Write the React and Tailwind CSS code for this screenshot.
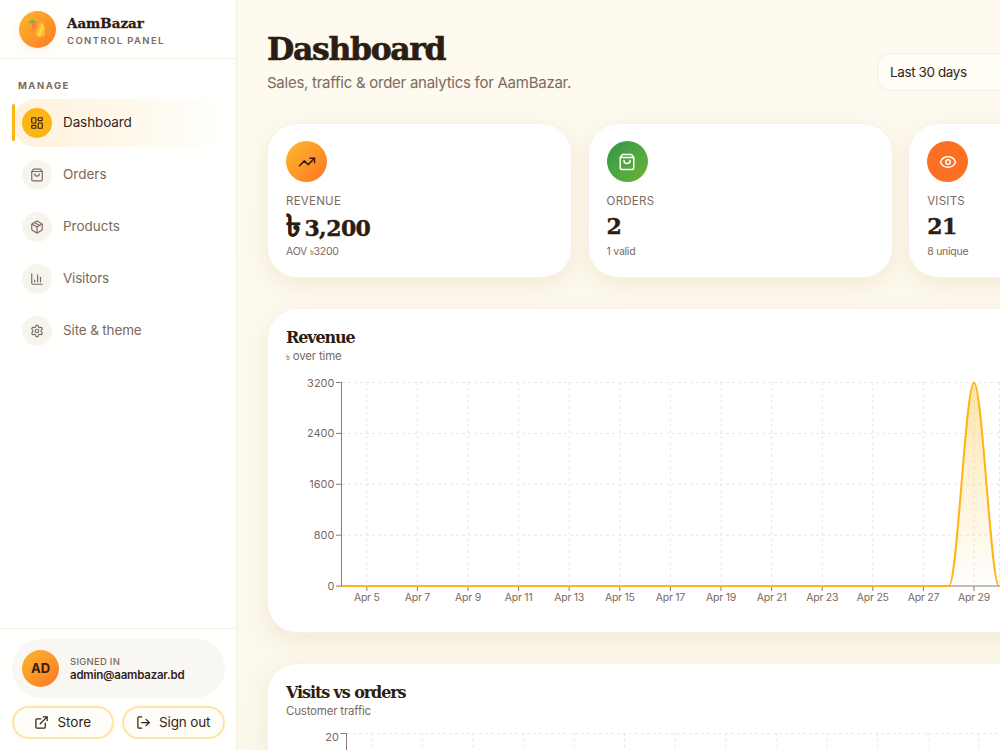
import React from 'react';
import {
  ChartColumn,
  ExternalLink,
  Eye,
  LayoutDashboard,
  LogOut,
  Package,
  Settings,
  TrendingUp,
} from 'lucide-react';

const NAV = [
  { label: 'Dashboard', icon: LayoutDashboard, active: true, tracking: 'tracking-[-0.1px]' },
  { label: 'Orders', icon: BagIcon, tracking: 'tracking-[0px]' },
  { label: 'Products', icon: Package, tracking: 'tracking-[0px]' },
  { label: 'Visitors', icon: ChartColumn, tracking: 'tracking-[-0.2px]' },
  { label: 'Site & theme', icon: Settings, tracking: 'tracking-[-0.15px]' },
];

const STATS = [
  {
    label: 'Revenue',
    value: <><span className="mr-[4px] text-[30px] leading-none">৳</span>3,200</>,
    note: <>AOV <span className="text-[8px]">৳</span>3200</>,
    icon: TrendingUp,
    tone: 'bg-linear-to-br from-[#fdba2d] to-[#fb7324] text-[#33200f]',
  },
  { label: 'Orders', value: '2', note: '1 valid', icon: BagIcon, tone: 'bg-linear-to-br from-[#2f9748] to-[#6ab433] text-white' },
  { label: 'Visits', value: '21', note: '8 unique', icon: Eye, tone: 'bg-[#fb7022] text-white' },
];

function BagIcon({ className, strokeWidth = 2 }) {
  return (
    <svg className={className} viewBox="0 0 24 24" fill="none" stroke="currentColor" strokeWidth={strokeWidth} strokeLinecap="round" strokeLinejoin="round">
      <path d="M6 2 3 6v14a2 2 0 0 0 2 2h14a2 2 0 0 0 2-2V6l-3-4Z" />
      <path d="M3 6h18" />
      <path d="M16 10a4 4 0 0 1-8 0" />
    </svg>
  );
}

function Mango() {
  return (
    <svg className="h-5 w-5" viewBox="0 0 20 20">
      <defs>
        <linearGradient id="mango" x1="0.1" y1="0.3" x2="0.85" y2="0.6">
          <stop offset="0" stopColor="#ff7a39" />
          <stop offset="0.4" stopColor="#ffa22e" />
          <stop offset="0.8" stopColor="#ffdc3c" />
          <stop offset="1" stopColor="#ffb92c" />
        </linearGradient>
      </defs>
      <path d="M5 3.600C8.300 1.800 13.500 2.700 16 6.500C17.800 10.300 17.700 15.200 15.700 17.200C13.200 19 8.200 17.500 6 14C3.500 10.300 3 5.400 5 3.600Z" fill="url(#mango)" />
      <path d="M.6 3.200C2.600.8 6.300.6 7.500 2.600C6.500 4.300 3 5.300.6 3.200Z" fill="#73b62d" />
    </svg>
  );
}

function Sidebar() {
  return (
    <aside className="flex w-[237px] shrink-0 flex-col border-r border-[#f1eee6] bg-[#fffffd]">
      <div className="flex h-[59px] items-center gap-[11px] border-b border-[#f1f0ec] pl-[19px]">
        <div className="flex h-[37px] w-[37px] items-center justify-center rounded-full bg-linear-to-br from-[#fdb72d] to-[#fb7926] shadow-[0_3px_12px_rgba(251,150,40,0.12)]">
          <Mango />
        </div>
        <div className="pt-1">
          <div className="font-['DejaVu_Serif',serif] text-[13.5px] leading-[18px] font-bold tracking-[-0.05px] text-[#2c1d12] [-webkit-text-stroke:0.3px_#2c1d12]">AamBazar</div>
          <div className="mt-[2px] text-[9.5px] leading-[14px] font-semibold tracking-[1.4px] text-[#7b6a61]">CONTROL PANEL</div>
        </div>
      </div>

      <div className="mt-[19px] pl-[18px] text-[9.5px] leading-[15px] font-bold tracking-[1.5px] text-[#7b6a61]">MANAGE</div>

      <nav className="mt-[6px] flex flex-1 flex-col gap-1 px-3">
        {NAV.map(({ label, icon: Icon, active, tracking }) => (
          <div
            key={label}
            className={`relative flex h-12 items-center gap-[11px] rounded-full pl-[10px] text-[13.5px] ${active ? 'bg-linear-to-r from-[#fff1dc] via-[#fff8ea] to-[#fffffd] text-[#33251c]' : 'text-[#7b6a61]'}`}
          >
            {active && <span className="absolute top-[5px] left-0 h-[37px] w-[3px] rounded-full bg-[#fdb515]" />}
            <span className={`flex h-[30px] w-[30px] items-center justify-center rounded-full ${active ? 'bg-[#fdb515]' : 'bg-[#f6f4ed]'}`}>
              <Icon className="h-[14px] w-[14px]" strokeWidth={2} />
            </span>
            <span className={`pb-px ${tracking}`}>{label}</span>
          </div>
        ))}
      </nav>

      {/* Account */}
      <div className="flex h-[122px] flex-col border-t border-[#f1f0ec] px-[11.5px] pt-[10px]">
        <div className="flex h-[59px] items-center gap-[11px] rounded-full bg-[#f8f7f3] pl-[10.5px]">
          <div className="flex h-[37px] w-[37px] items-center justify-center rounded-full bg-linear-to-br from-[#fdb72d] to-[#fb7425] text-[13px] font-bold text-[#33200f]">AD</div>
          <div>
            <div className="text-[9.5px] leading-[13px] font-medium tracking-[0.24px] text-[#7b6a61]">SIGNED IN</div>
            <div className="text-[11.5px] leading-[14px] font-semibold tracking-[-0.22px] text-[#33251c]">admin@aambazar.bd</div>
          </div>
        </div>
        <div className="mt-2 flex gap-2 text-[13.5px] text-[#33251c]">
          <button className="flex h-[33px] flex-1 items-center justify-center gap-[8px] rounded-full border-2 border-[#ffe4a5] bg-[#fffdf7]">
            <ExternalLink className="h-[15px] w-[15px]" />
            <span className="tracking-[-0.05px]">Store</span>
          </button>
          <button className="flex h-[33px] flex-1 items-center justify-center gap-[8px] rounded-full border-2 border-[#ffe4a5] bg-[#fffdf7]">
            <LogOut className="h-[15px] w-[15px]" />
            <span className="tracking-[-0.15px]">Sign out</span>
          </button>
        </div>
      </div>
    </aside>
  );
}

function StatCard({ label, value, note, icon: Icon, tone }) {
  return (
    <div className="h-[155px] w-[305px] shrink-0 rounded-[30px] border border-[#f6f2e7] bg-white px-[18px] pt-[17px] shadow-[0_7px_22px_rgba(180,120,40,0.12)]">
      <div className={`flex h-[41px] w-[41px] items-center justify-center rounded-full ${tone}`}>
        <Icon className="h-[18px] w-[18px]" strokeWidth={2} />
      </div>
      <div className="mt-[11px] text-[11.5px] leading-[17px] tracking-[0.25px] text-[#7b6a61] uppercase">{label}</div>
      <div className="mt-px h-[30px] font-['DejaVu_Serif',serif] text-[22px] leading-[30px] font-bold tracking-[-0.6px] text-[#2c1d12] [-webkit-text-stroke:0.4px_#2c1d12]">{value}</div>
      <div className="mt-[3px] h-4 text-[10.5px] leading-[16px] tracking-[-0.25px] text-[#7b6a61]">{note}</div>
    </div>
  );
}

const DAY = 25.3;

function RevenueChart() {
  const days = Array.from({ length: 13 }, (_, i) => ({ label: `Apr ${5 + i * 2}`, x: 56 + DAY * (1 + i * 2) - 0.5 }));
  const rows = [3200, 2400, 1600, 800, 0];
  const curve = 'C671.3 212 679.6 8.5 688 8.5C696.3 8.5 704.7 212 713 212';

  return (
    <svg className="block h-[240px] w-[760px]" viewBox="0 0 760 240">
      <defs>
        <linearGradient id="revenue" x1="0" y1="0" x2="0" y2="1">
          <stop offset="0" stopColor="#fdb515" stopOpacity="0.35" />
          <stop offset="1" stopColor="#fdb515" stopOpacity="0" />
        </linearGradient>
      </defs>
      <g stroke="#ebeade" strokeDasharray="3 3">
        {rows.slice(0, 4).map((v, i) => <path key={v} d={`M56 ${8.5 + i * 50.9}H760`} />)}
        {days.map((d) => <path key={d.label} d={`M${d.x} 8V211`} />)}
        <path d="M713.5 8V211" />
      </g>
      <g stroke="#8b7b73">
        <path d="M55.5 8V212M55.5 212H760" />
        {rows.map((v, i) => <path key={v} d={`M50 ${8.5 + i * 50.9}h6`} />)}
        {days.map((d) => <path key={d.label} d={`M${d.x} 212v5`} />)}
      </g>
      <path d={`M663 212${curve}`} fill="url(#revenue)" />
      <path d={`M56 212H663${curve}H760`} fill="none" stroke="#fdb515" strokeWidth="2" />
      <g fill="#7b6a61" fontSize="11">
        {rows.map((v, i) => <text key={v} x="48.5" y={12.5 + i * 50.9} textAnchor="end">{v}</text>)}
        {days.map((d) => <text key={d.label} x={d.x} y="227" textAnchor="middle" fontSize="10.5" letterSpacing="-0.25">{d.label}</text>)}
      </g>
    </svg>
  );
}

function VisitsChart() {
  return (
    <svg className="block h-[230px] w-[760px]" viewBox="0 0 760 230">
      <g stroke="#ebeade" strokeDasharray="3 3">
        <path d="M61 8.5H760" />
        {Array.from({ length: 13 }, (_, i) => <path key={i} d={`M${85.5 + i * 50.6} 8V220`} />)}
      </g>
      <path d="M54.5 8.5h6V220" fill="none" stroke="#8b7b73" />
      <text x="53" y="15.5" textAnchor="end" fontSize="11" fill="#7b6a61">20</text>
    </svg>
  );
}

function ChartCard({ title, note, children, bodyClass }) {
  return (
    <section className="h-[325px] w-[946px] rounded-[30px] border border-[#f6f2e7] bg-white px-[18px] pt-[18px] shadow-[0_7px_22px_rgba(180,120,40,0.12)]">
      <h2 className="font-['DejaVu_Serif',serif] text-[16px] leading-[22px] font-bold tracking-[-1.1px] text-[#2c1d12]">{title}</h2>
      <p className="h-[14px] text-[11.5px] leading-[14px] tracking-[-0.2px] text-[#7b6a61]">{note}</p>
      <div className={bodyClass}>{children}</div>
    </section>
  );
}

export default function App() {
  return (
    <div className="flex h-[750px] w-[1000px] overflow-hidden bg-[#fffbf1] font-[Inter,'Noto_Sans',sans-serif] text-[#2c1d12]">
      <Sidebar />
      <main className="min-w-0 flex-1 overflow-hidden bg-linear-to-b from-[#fefaf0] to-[#fbf8ec] pl-[30px]">
        <header className="flex h-[123px] w-[1265px] pt-[29px]">
          <div className="w-[610px] shrink-0">
            <h1 className="font-['DejaVu_Serif',serif] text-[31.5px] leading-[40px] font-bold tracking-[-1.35px] [-webkit-text-stroke:0.6px_#2c1d12]">Dashboard</h1>
            <p className="mt-[2px] text-[15px] leading-[23px] tracking-[-0.26px] text-[#7b6a61]">Sales, traffic &amp; order analytics for AamBazar.</p>
          </div>
          <div className="mt-[24px] flex h-[38px] w-[190px] items-center rounded-[14px] border border-[#f1eddd] bg-[#fffdf6] pl-[12px] text-[13.5px] tracking-[-0.4px] text-[#33251c]">
            Last 30 days
          </div>
        </header>

        <div className="flex w-[1268px] gap-[15.6px]">
          {STATS.map((s) => <StatCard key={s.label} {...s} />)}
        </div>

        <div className="mt-[30px] flex flex-col gap-[30px]">
          <ChartCard title="Revenue" note={<><span className="text-[8px]">৳</span> over time</>} bodyClass="mt-[11px]">
            <RevenueChart />
          </ChartCard>
          <ChartCard title="Visits vs orders" note="Customer traffic" bodyClass="mt-[7px]">
            <VisitsChart />
          </ChartCard>
        </div>
      </main>
    </div>
  );
}
